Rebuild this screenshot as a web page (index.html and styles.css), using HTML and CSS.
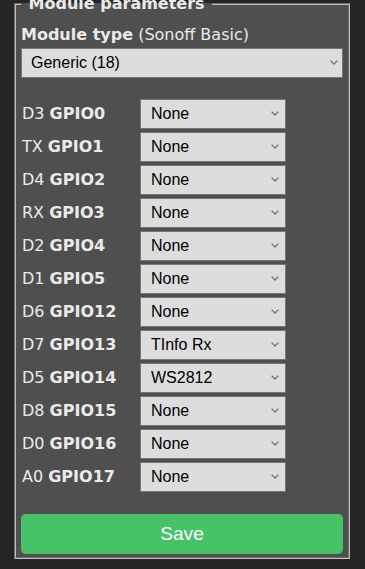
FILE: index.html
```html
<!DOCTYPE html>
<html>
<head>
  <title>Configure Module</title>
  <meta charset="UTF-8">
  <link rel="stylesheet" href="styles.css">
</head>
<body>
  <div class="main">
    <fieldset class="params">
      <legend><b>&nbsp;Module parameters&nbsp;</b></legend>
      <form class="module-form">
        <div class="module-type"><b>Module type</b> (Sonoff Basic)</div>
        <select class="module-select">
          <option>Generic (18)</option>
        </select>

        <div class="gpio-list">
          <div class="gpio-label">D3 <b>GPIO0</b></div>
          <select class="gpio-select"><option>None</option></select>
          <div class="gpio-label">TX <b>GPIO1</b></div>
          <select class="gpio-select"><option>None</option></select>
          <div class="gpio-label">D4 <b>GPIO2</b></div>
          <select class="gpio-select"><option>None</option></select>
          <div class="gpio-label">RX <b>GPIO3</b></div>
          <select class="gpio-select"><option>None</option></select>
          <div class="gpio-label">D2 <b>GPIO4</b></div>
          <select class="gpio-select"><option>None</option></select>
          <div class="gpio-label">D1 <b>GPIO5</b></div>
          <select class="gpio-select"><option>None</option></select>
          <div class="gpio-label">D6 <b>GPIO12</b></div>
          <select class="gpio-select"><option>None</option></select>
          <div class="gpio-label">D7 <b>GPIO13</b></div>
          <select class="gpio-select"><option>TInfo Rx</option></select>
          <div class="gpio-label">D5 <b>GPIO14</b></div>
          <select class="gpio-select"><option>WS2812</option></select>
          <div class="gpio-label">D8 <b>GPIO15</b></div>
          <select class="gpio-select"><option>None</option></select>
          <div class="gpio-label">D0 <b>GPIO16</b></div>
          <select class="gpio-select"><option>None</option></select>
          <div class="gpio-label">A0 <b>GPIO17</b></div>
          <select class="gpio-select"><option>None</option></select>
        </div>

        <button type="button" class="button bgrn">Save</button>
      </form>
    </fieldset>
  </div>
</body>
</html>
```

FILE: styles.css
```css
body {
  margin: 0;
  background: #252525;
  font-family: "DejaVu Sans", Verdana, sans-serif;
  font-size: 16px;
  color: #eaeaea;
}

/* page is scrolled a little, legend cut at top */
.main {
  margin-top: -5px;
}

.params {
  width: 336px;
  box-sizing: border-box;
  margin: 0 0 0 14px;
  padding: 0 5px 3px;
  background: #4f4f4f;
  border: 2px groove #c0c0c0;
  min-width: 0;
}

.params legend {
  padding: 0 2px;
  line-height: 18.6px;
}

.module-form {
  display: flex;
  flex-direction: column;
}

.module-type {
  margin-top: 11px;
  line-height: 19px;
}

select {
  appearance: none;
  -webkit-appearance: none;
  font-family: "Liberation Sans", Arial, sans-serif;
  font-size: 16px;
  padding: 5px 20px 5px 10px;
  height: 30px;
  box-sizing: border-box;
  background-color: #dddddd;
  background-image: url("data:image/svg+xml;utf8,<svg xmlns='http://www.w3.org/2000/svg' width='8' height='5' viewBox='0 0 8 5'><path d='M0.6 0.6 L4 4 L7.4 0.6' fill='none' stroke='%23707070' stroke-width='1.3'/></svg>");
  background-repeat: no-repeat;
  background-position: right 6px center;
  color: #000;
  border: 1px solid #767676;
  border-radius: 0;
}

.module-select {
  width: 100%;
  margin-top: 4px;
  padding-left: 9px;
  background-position: right 4px center;
}

/* GPIO table */
.gpio-list {
  display: grid;
  grid-template-columns: 119px 146px;
  row-gap: 3px;
  align-items: center;
  margin-top: 21px;
}

.gpio-label {
  padding-left: 1px;
  white-space: nowrap;
}

.gpio-select {
  width: 146px;
}

.button {
  margin-top: 22px;
  height: 40px;
  line-height: 40px;
  width: 100%;
  padding: 0;
  border: 0;
  border-radius: 0.3rem;
  background: #1fa3ec;
  color: #fff;
  font-family: "Liberation Sans", Arial, sans-serif;
  font-size: 1.2rem;
  cursor: pointer;
}

.button.bgrn {
  background: #47c266;
}
```
